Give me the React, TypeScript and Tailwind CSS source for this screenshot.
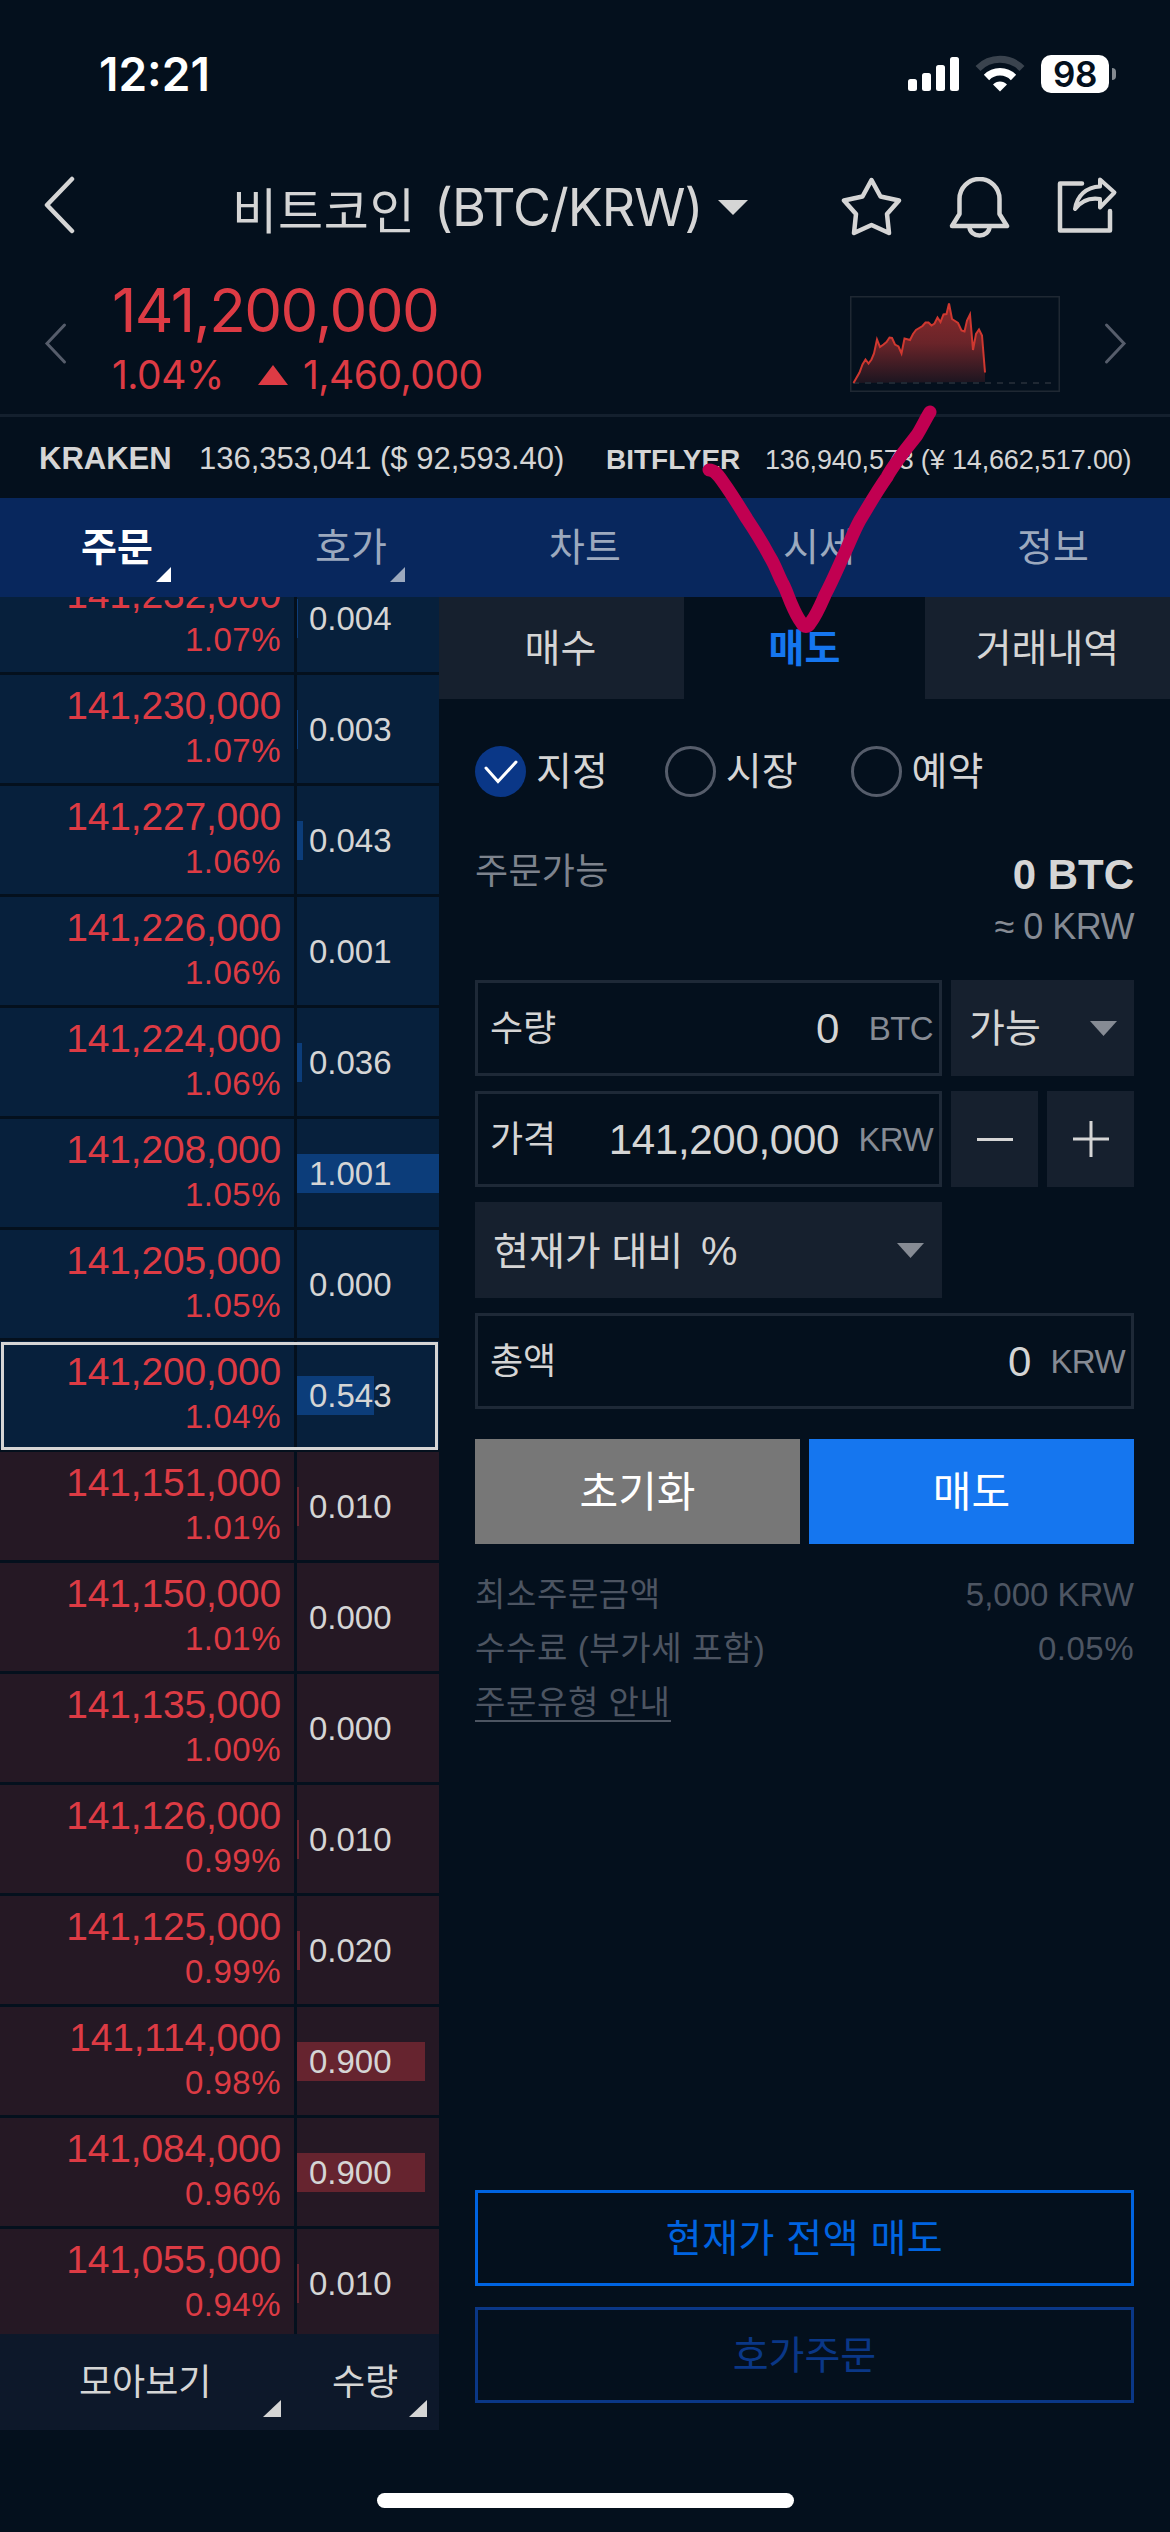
import React from 'react';

// ===== 데이터 =====
type Order = {
  price: string;
  rate: string;
  amount: string;
  bar: number;
  side: 'ask' | 'bid';
  current?: boolean;
};

const orders: Order[] = [
  { price: '141,232,000', rate: '1.07%', amount: '0.004', bar: 1, side: 'ask' },
  { price: '141,230,000', rate: '1.07%', amount: '0.003', bar: 1, side: 'ask' },
  { price: '141,227,000', rate: '1.06%', amount: '0.043', bar: 6, side: 'ask' },
  { price: '141,226,000', rate: '1.06%', amount: '0.001', bar: 0, side: 'ask' },
  { price: '141,224,000', rate: '1.06%', amount: '0.036', bar: 5, side: 'ask' },
  { price: '141,208,000', rate: '1.05%', amount: '1.001', bar: 142, side: 'ask' },
  { price: '141,205,000', rate: '1.05%', amount: '0.000', bar: 0, side: 'ask' },
  { price: '141,200,000', rate: '1.04%', amount: '0.543', bar: 77, side: 'ask', current: true },
  { price: '141,151,000', rate: '1.01%', amount: '0.010', bar: 2, side: 'bid' },
  { price: '141,150,000', rate: '1.01%', amount: '0.000', bar: 0, side: 'bid' },
  { price: '141,135,000', rate: '1.00%', amount: '0.000', bar: 0, side: 'bid' },
  { price: '141,126,000', rate: '0.99%', amount: '0.010', bar: 2, side: 'bid' },
  { price: '141,125,000', rate: '0.99%', amount: '0.020', bar: 3, side: 'bid' },
  { price: '141,114,000', rate: '0.98%', amount: '0.900', bar: 128, side: 'bid' },
  { price: '141,084,000', rate: '0.96%', amount: '0.900', bar: 128, side: 'bid' },
  { price: '141,055,000', rate: '0.94%', amount: '0.010', bar: 2, side: 'bid' },
];

const menus = [
  { label: '주문', active: true, more: true },
  { label: '호가', active: false, more: true },
  { label: '차트', active: false, more: false },
  { label: '시세', active: false, more: false },
  { label: '정보', active: false, more: false },
];

const sparkline =
  '3.5,87 9.5,76.5 12.5,68.5 15.5,63.5 18.5,67.5 21.5,63.5 24,57.5 27,43.5 30,51 33.5,48.5 36.5,46 39.5,41.5 42,42 45,48.5 48.5,50.5 51.5,57.5 54.5,42.5 60,44 63,38 66,34 72.5,30 75.5,26.5 78.5,26.5 81.5,29.5 84.5,27.5 87.5,21.5 90.5,26 93.5,18.5 96.5,18 99,7.5 102,23 108,27 111.5,34.5 114.5,35.5 117,24.5 120,18.5 123,54 126,38 129,33.5 132,39.5 135,76.5';

// ===== 상태바 =====
function StatusBar() {
  return (
    <div className="flex h-[148px] items-center pl-[99px] pr-[54px] font-['Inter',sans-serif]">
      <span className="text-[46px] leading-[56px] font-semibold text-white">12:21</span>
      <div className="ml-auto flex items-center">
        <svg width="52" height="38" viewBox="0 0 52 38" fill="#fff">
          <rect x="0" y="24" width="9" height="12" rx="2.5" />
          <rect x="14" y="18" width="9" height="18" rx="2.5" />
          <rect x="28" y="10" width="9" height="26" rx="2.5" />
          <rect x="42" y="2" width="9" height="34" rx="2.5" />
        </svg>
        <svg className="ml-[15px]" width="50" height="38" viewBox="0 0 50 38" fill="none">
          <path d="M3 13.5 A31 31 0 0 1 47 13.5" stroke="#3a434e" strokeWidth="7" />
          <path d="M11.5 22.5 A19 19 0 0 1 38.5 22.5" stroke="#fff" strokeWidth="7.5" />
          <path d="M25 36.5 L18 29.5 A9.5 9.5 0 0 1 32 29.5 Z" fill="#fff" />
        </svg>
        <div className="ml-[16px] flex h-[38px] w-[68px] items-center justify-center rounded-[10px] bg-white text-[35px] leading-[38px] font-semibold tracking-[-0.5px] text-[#04101d]">
          98
        </div>
        <div className="ml-[3px] h-[12px] w-[4px] rounded-r-full bg-[#848a91]" />
      </div>
    </div>
  );
}

// ===== 헤더 =====
function Header() {
  return (
    <div className="flex h-[116px] items-center pl-[42px] pr-[52px]">
      <svg width="34" height="60" viewBox="0 0 34 60" fill="none" stroke="#d5d5d5" strokeWidth="4.5" strokeLinecap="round" strokeLinejoin="round">
        <path d="M30 3 L5 29 L30 55" />
      </svg>
      <div className="ml-[156px] flex items-center pt-[3px] leading-[60px] text-[#d5d5d5]">
        <span className="w-[202px] whitespace-nowrap font-['Noto_Sans_CJK_KR',sans-serif] text-[49px] tracking-[0.8px]">비트코인</span>
        <span className="w-[266px] whitespace-nowrap font-['Inter',sans-serif] text-[52px] tracking-[-1px]">(BTC/KRW)</span>
      </div>
      <svg className="ml-[18px] mt-[2px]" width="30" height="15" viewBox="0 0 30 15" fill="#d5d5d5">
        <path d="M0 0 H30 L15 15 Z" />
      </svg>
      <div className="ml-auto mt-[3px] flex gap-[47px]">
        <svg width="61" height="60" viewBox="0 0 61 60" fill="none" stroke="#d5d5d5" strokeWidth="4.5" strokeLinejoin="round">
          <path d="M30.5 3 L39.5 19.5 L58 23.5 L46 37 L48 56 L30.5 48 L13 56 L15 37 L3 23.5 L21.5 19.5 Z" />
        </svg>
        <svg width="61" height="62" viewBox="0 0 61 62" fill="none" stroke="#d5d5d5" strokeWidth="4.5" strokeLinejoin="round">
          <path d="M10.5 37 V22 a20 20 0 0 1 40 0 V37 L58 49 H3 Z" />
          <path d="M20.5 50 a10 8.5 0 0 0 20 0" />
        </svg>
        <svg width="61" height="60" viewBox="0 0 61 60" fill="none" stroke="#d5d5d5" strokeWidth="4.5" strokeLinecap="round" strokeLinejoin="round">
          <path d="M25 6.5 H3 V53.5 H53 V34" />
          <path d="M43 2.5 L57.5 15.5 L43 30.5 V22 C33 20.5 24 24 18 32 C20 19 29 10 43 9.5 Z" strokeWidth="4" />
        </svg>
      </div>
    </div>
  );
}

// ===== 현재가 =====
function PriceSummary() {
  return (
    <div className="flex h-[153px] items-center border-b-[3px] border-[#14202e] pl-[43px] pr-[42px] text-[#dd3b44]">
      <svg className="mt-[8px]" width="25" height="44" viewBox="0 0 25 44" fill="none" stroke="#565d6b" strokeWidth="3" strokeLinecap="round">
        <path d="M21.5 4 L4 22.5 L21.5 41" />
      </svg>
      <div className="ml-[44px] flex flex-col font-['Inter',sans-serif]">
        <span className="text-[60px] leading-[72px] tracking-[-1.6px]">141,200,000</span>
        <div className="mt-[-1px] flex items-center text-[39px] leading-[60px] tracking-[-0.5px]">
          <span className="w-[146px]">1.04%</span>
          <svg width="30" height="20" viewBox="0 0 30 20" fill="#dd3b44">
            <path d="M15 0 L30 20 H0 Z" />
          </svg>
          <span className="ml-[15px]">1,460,000</span>
        </div>
      </div>
      <svg className="ml-auto mt-[10px]" width="210" height="96" viewBox="0 0 210 96" fill="none">
        <defs>
          <linearGradient id="spark" x1="0" y1="0" x2="0" y2="1">
            <stop offset="0" stopColor="#8a2a2c" />
            <stop offset="0.5" stopColor="#6a2429" />
            <stop offset="1" stopColor="#1c1520" />
          </linearGradient>
        </defs>
        <rect x="0.75" y="0.75" width="208.5" height="94.5" stroke="#1f2833" strokeWidth="1.5" />
        <polygon points={`${sparkline} 135,86`} fill="url(#spark)" />
        <path d="M3 87 H202" stroke="#1f2833" strokeWidth="2" strokeDasharray="6 6" />
        <polyline points={sparkline} stroke="#cf3830" strokeWidth="2" />
      </svg>
      <svg className="ml-[43px] mt-[8px]" width="25" height="44" viewBox="0 0 25 44" fill="none" stroke="#565d6b" strokeWidth="3" strokeLinecap="round">
        <path d="M3.5 4 L21 22.5 L3.5 41" />
      </svg>
    </div>
  );
}

// ===== 해외 시세 =====
function Ticker() {
  return (
    <div className="flex h-[81px] items-center pl-[39px] pt-[2px] leading-[40px] whitespace-nowrap text-[#d5d5d5]">
      <span className="w-[160px] text-[31px] font-bold">KRAKEN</span>
      <span className="w-[407px] text-[31px]">136,353,041 ($ 92,593.40)</span>
      <span className="w-[159px] pt-[2px] text-[28px] font-bold">BITFLYER</span>
      <span className="pt-[2px] text-[27px] tracking-[-0.15px]">136,940,573 (¥ 14,662,517.00)</span>
    </div>
  );
}

function CornerMark({ className }: { className: string }) {
  return (
    <svg className={className} viewBox="0 0 10 10" preserveAspectRatio="none" fill="currentColor">
      <path d="M10 0 V10 H0 Z" />
    </svg>
  );
}

function Caret() {
  return (
    <svg width="27" height="15" viewBox="0 0 27 15" fill="#868b94">
      <path d="M0 0 H27 L13.5 15 Z" />
    </svg>
  );
}

// ===== 상단 메뉴 =====
function MainMenu() {
  return (
    <div className="grid h-[99px] grid-cols-5 bg-[#08275d]">
      {menus.map((menu) => (
        <div
          key={menu.label}
          className={`relative flex items-center justify-center text-[39px] leading-[50px] ${
            menu.active ? 'font-bold text-white' : 'text-[#9ca9be]'
          }`}
        >
          {menu.label}
          {menu.more && <CornerMark className="absolute bottom-[15px] right-[63px] h-[15px] w-[15px]" />}
        </div>
      ))}
    </div>
  );
}

// ===== 호가창 =====
function OrderRow({ order }: { order: Order }) {
  const ask = order.side === 'ask';
  const cell = ask ? 'bg-[#07203c]' : 'bg-[#251824]';
  return (
    <div className="relative flex h-[108px] shrink-0 gap-[3px]">
      <div className={`flex w-[294px] flex-col items-end pr-[13px] pt-[9px] text-[#dd3b44] ${cell}`}>
        <span className="text-[39px] leading-[44px] tracking-[-0.2px]">{order.price}</span>
        <span className="mt-px text-[33px] leading-[44px] tracking-[0.5px]">{order.rate}</span>
      </div>
      <div className={`relative w-[142px] pl-[12px] pt-[35px] ${cell}`}>
        <div
          className={`absolute left-0 top-[35px] h-[39px] ${ask ? 'bg-[#0c3d7a]' : 'bg-[#66242f]'}`}
          style={{ width: order.bar }}
        />
        <span className="relative block text-[33px] leading-[39px] text-[#d5d5d5]">{order.amount}</span>
      </div>
      {order.current && <div className="absolute inset-x-[1px] top-[1px] bottom-[-1px] border-[3px] border-[#d5d5d5]" />}
    </div>
  );
}

function OrderBook() {
  return (
    <div className="w-[439px] shrink-0">
      <div className="h-[1737px] overflow-hidden">
        <div className="mt-[-33px] flex flex-col gap-[3px]">
          {orders.map((order) => (
            <OrderRow key={order.price} order={order} />
          ))}
        </div>
      </div>
      <div className="flex h-[96px] bg-[#0d182a] text-[36px] leading-[50px] text-[#d5d5d5]">
        <div className="relative w-[294px] pl-[79px] pt-[24px]">
          모아보기
          <CornerMark className="absolute bottom-[13px] right-[13px] h-[17px] w-[18px]" />
        </div>
        <div className="relative flex-1 pl-[38px] pt-[24px]">
          수량
          <CornerMark className="absolute bottom-[13px] right-[12px] h-[17px] w-[18px]" />
        </div>
      </div>
    </div>
  );
}

// ===== 주문 폼 =====
function Radio({ label, checked, className = '' }: { label: string; checked?: boolean; className?: string }) {
  return (
    <div className={`flex shrink-0 items-center gap-[10px] whitespace-nowrap text-[39px] leading-[50px] text-[#d5d5d5] ${className}`}>
      {checked ? (
        <span className="flex h-[51px] w-[51px] items-center justify-center rounded-full bg-[#0a3787]">
          <svg width="34" height="24" viewBox="0 0 34 24" fill="none" stroke="#fff" strokeWidth="3" strokeLinecap="round">
            <path d="M2 8 L14 21.5 L32 2" />
          </svg>
        </span>
      ) : (
        <span className="h-[51px] w-[51px] rounded-full border-[3px] border-[#565d6b]" />
      )}
      {label}
    </div>
  );
}

function Field({ label, value, unit, className }: { label: string; value: string; unit: string; className: string }) {
  return (
    <div className={`flex h-[96px] items-center border-[3px] border-[#1e2937] pl-[12px] pr-[6px] text-[#d5d5d5] ${className}`}>
      <span className="pt-[2px] text-[36px] leading-[50px]">{label}</span>
      <span className="ml-auto pt-px text-[42px] leading-[50px] tracking-[-0.3px]">{value}</span>
      <span className="w-[94px] pt-px text-right text-[33px] leading-[50px] tracking-[-0.6px] text-[#868b94]">{unit}</span>
    </div>
  );
}

function OrderForm() {
  return (
    <div className="flex flex-1 flex-col">
      <div className="flex h-[102px] text-[39px] leading-[50px] text-[#d5d5d5]">
        <div className="flex w-[245px] items-center justify-center bg-[#16202e] pt-[2px] pr-[2px]">매수</div>
        <div className="flex flex-1 items-center justify-center pt-[2px] font-bold text-[#1576ef]">매도</div>
        <div className="flex w-[245px] items-center justify-center bg-[#16202e] pt-[2px]">거래내역</div>
      </div>

      <div className="flex flex-col pl-[36px] pr-[36px]">
        {/* 주문 유형 */}
        <div className="mt-[47px] flex h-[51px]">
          <Radio label="지정" checked />
          <Radio label="시장" className="ml-[57px]" />
          <Radio label="예약" className="ml-[53px]" />
        </div>

        {/* 주문 가능 금액 */}
        <div className="mt-[47px] flex h-[136px] justify-between">
          <span className="pt-px text-[36px] leading-[54px] tracking-[0.3px] text-[#7d838d]">주문가능</span>
          <div className="flex flex-col items-end">
            <span className="mt-[6px] text-[42px] leading-[50px] font-bold text-[#d5d5d5]">0 BTC</span>
            <span className="text-[36px] leading-[54px] tracking-[-0.5px] text-[#868b94]">≈ 0 KRW</span>
          </div>
        </div>

        <div className="flex flex-col gap-[15px]">
          <div className="flex gap-[9px]">
            <Field label="수량" value="0" unit="BTC" className="w-[467px]" />
            <div className="flex flex-1 items-center justify-between bg-[#16202e] pl-[18px] pr-[17px] text-[39px] leading-[50px] text-[#d5d5d5]">
              <span className="pt-[2px]">가능</span>
              <Caret />
            </div>
          </div>
          <div className="flex gap-[9px]">
            <Field label="가격" value="141,200,000" unit="KRW" className="w-[467px]" />
            <div className="flex w-[87px] items-center justify-center bg-[#16202e]">
              <div className="h-[3px] w-[36px] bg-[#d5d5d5]" />
            </div>
            <div className="flex w-[87px] items-center justify-center bg-[#16202e]">
              <svg width="36" height="36" viewBox="0 0 36 36" stroke="#d5d5d5" strokeWidth="3">
                <path d="M18 0 V36 M0 18 H36" />
              </svg>
            </div>
          </div>
          <div className="flex h-[96px] w-[467px] items-center justify-between bg-[#16202e] pl-[18px] pr-[18px] text-[39px] leading-[50px] text-[#d5d5d5]">
            <span className="pt-[2px]">
              현재가 대비 <span className="ml-[7px] text-[41px] leading-[50px]">%</span>
            </span>
            <Caret />
          </div>
          <Field label="총액" value="0" unit="KRW" className="w-full" />
        </div>

        <div className="mt-[30px] flex h-[105px] gap-[9px] text-[42px] leading-[50px] text-white">
          <button className="flex-1 bg-[#777777] pt-[2px]">초기화</button>
          <button className="flex-1 bg-[#1576ef] pt-[2px]">매도</button>
        </div>

        {/* 안내 */}
        <div className="mt-[24px] text-[33px] leading-[54px] text-[#4d5562]">
          <div className="flex justify-between">
            <span className="tracking-[0.6px]">최소주문금액</span>
            <span>5,000 KRW</span>
          </div>
          <div className="flex justify-between">
            <span className="tracking-[0.6px]">수수료 (부가세 포함)</span>
            <span className="tracking-[0.5px]">0.05%</span>
          </div>
          <div className="flex">
            <span className="h-[46px] border-b-[2px] border-[#4d5562] tracking-[0.6px]">주문유형 안내</span>
          </div>
        </div>
      </div>

      <div className="mt-auto mb-[27px] flex flex-col gap-[21px] px-[36px] text-[39px] leading-[50px]">
        <button className="h-[96px] border-[3px] border-[#0064e1] pt-[2px] tracking-[0.5px] text-[#0064e1]">현재가 전액 매도</button>
        <button className="h-[96px] border-[3px] border-[#0a3787] pt-[2px] text-[#0a3787]">호가주문</button>
      </div>
    </div>
  );
}

export default function App() {
  return (
    <div className="relative flex h-[2532px] w-[1170px] flex-col overflow-hidden bg-[#04101d] font-['Liberation_Sans','Noto_Sans_CJK_KR',sans-serif]">
      <StatusBar />
      <Header />
      <PriceSummary />
      <Ticker />
      <MainMenu />
      <div className="flex h-[1833px]">
        <OrderBook />
        <OrderForm />
      </div>
      <div className="mx-auto mt-[63px] h-[15px] w-[417px] rounded-full bg-white" />

      {/* 손으로 그린 체크 표시 */}
      <svg className="absolute left-[690px] top-[395px]" width="260" height="250" viewBox="690 395 260 250" fill="none">
        <path
          d="M709 470 C715 470 718 475 723 482 C731 493 739 506 747 519 C755 531 763 544 770 557 C775 565 778 574 782 582 C786 589 788 596 791 603 C794 610 797 617 801 622 Q806 631 811 622 C817 614 821 604 825 595 C833 580 840 563 847 548 C851 539 855 529 860 520 C868 507 877 491 887 477 C890 471 894 466 898 460 C904 451 911 443 917 435 C922 427 925 420 930 412"
          stroke="#c10051"
          strokeWidth="13"
          strokeLinecap="round"
          strokeLinejoin="round"
        />
      </svg>
    </div>
  );
}
